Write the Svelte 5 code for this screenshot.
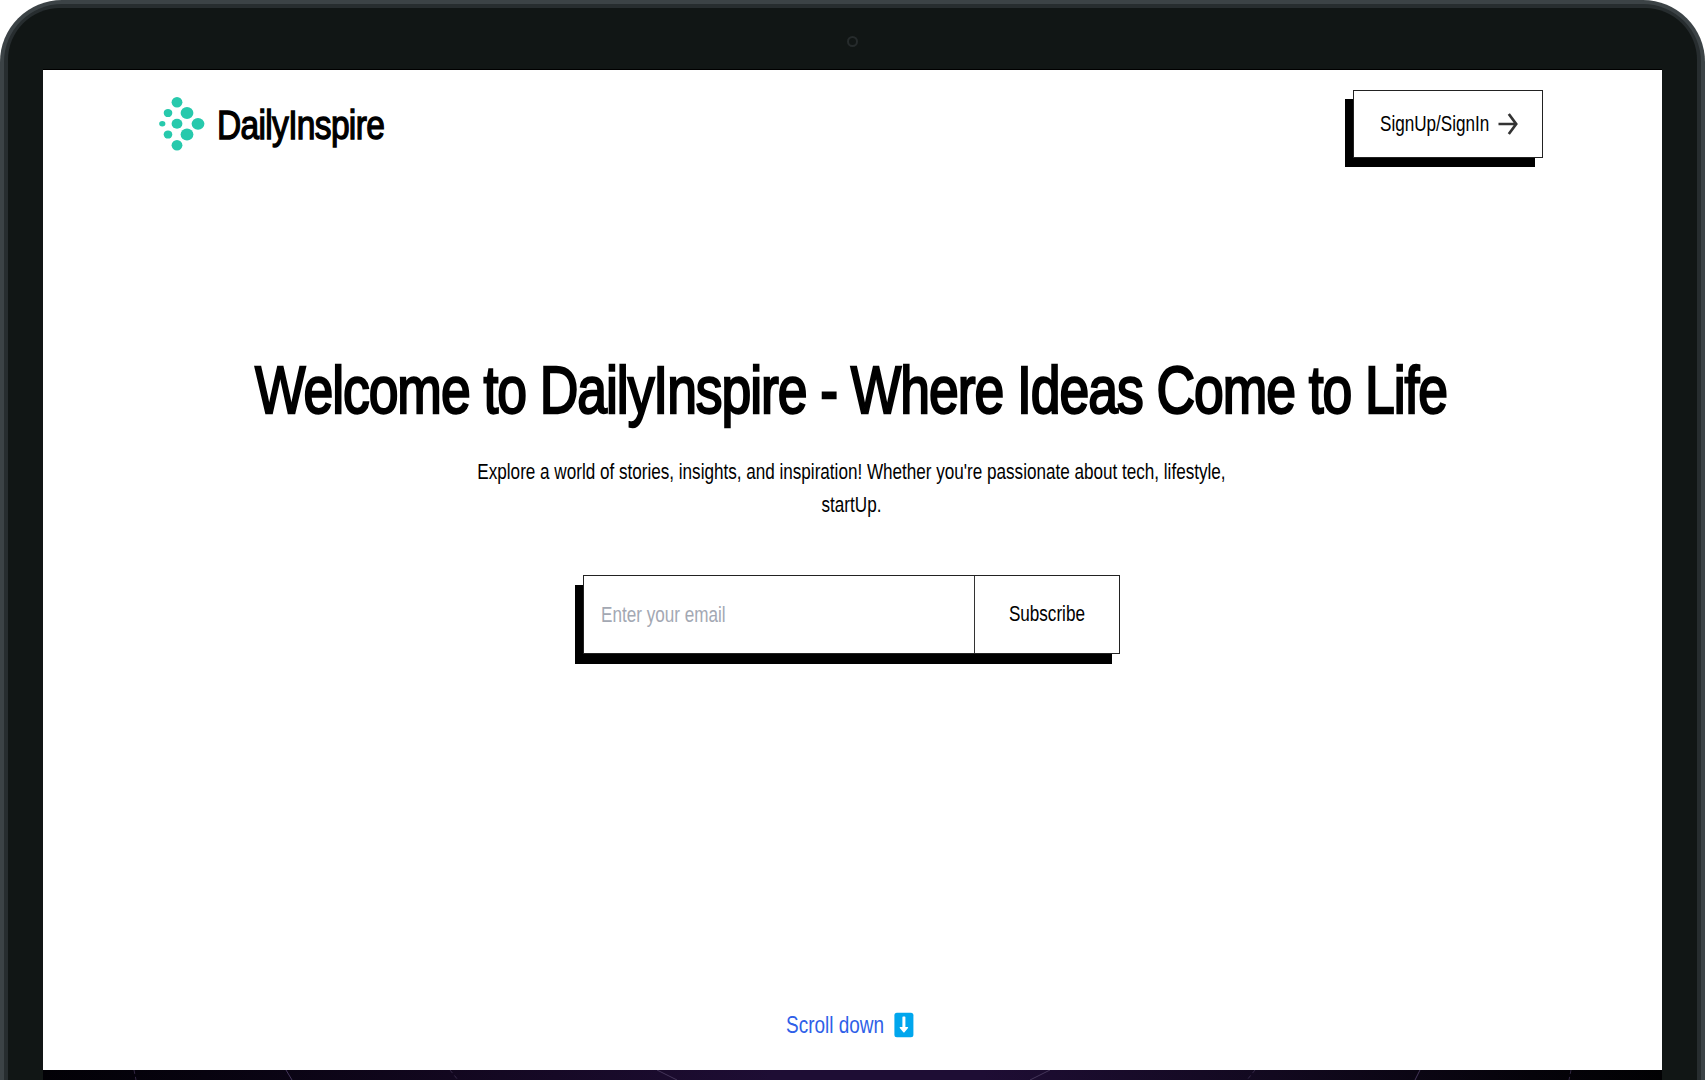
<script>
  const dots = [
    [37, 22.3, 5.4, 5.2], [28, 33, 4.3, 4.1], [47, 33, 6.4, 5.9],
    [22.3, 43.8, 3.1, 2.7], [37, 43.8, 5.4, 5], [58, 43.8, 6.4, 5.9],
    [28, 54.5, 4.3, 4.1], [47, 54.5, 6.4, 5.9], [37, 65.3, 5.4, 5.2]
  ];
  let email = $state('');
</script>

<div class="device">
  <div class="rim">
    <div class="bezel">
      <div class="camera"><i></i></div>
      <main class="screen">
        <header>
          <div class="brand">
            <svg width="48" height="56" viewBox="18 16 48 56" aria-hidden="true">
              {#each dots as [cx, cy, rx, ry]}
                <ellipse {cx} {cy} {rx} {ry} fill="#27c9ac" />
              {/each}
            </svg>
            <span class="brand-name">DailyInspire</span>
          </div>
          <button class="sign">
            <span class="sign-label">SignUp/SignIn</span>
            <svg width="20" height="24" viewBox="0 0 20 24" aria-hidden="true">
              <path d="M0.5 12H18M10.8 2L18.2 12L10.8 22" fill="none" stroke="#333" stroke-width="2.7" />
            </svg>
          </button>
        </header>

        <section class="hero">
          <h1><span>Welcome to DailyInspire - Where Ideas Come to Life</span></h1>
          <p>
            <span>Explore a world of stories, insights, and inspiration! Whether you're passionate about tech, lifestyle,</span>
            <span>startUp.</span>
          </p>
          <form onsubmit={(e) => e.preventDefault()}>
            <div class="field"><input type="email" placeholder="Enter your email" bind:value={email} /></div>
            <button><span>Subscribe</span></button>
          </form>
        </section>

        <div class="scroll">
          <span class="scroll-label">Scroll down</span>
          <svg width="20" height="26" viewBox="0 0 20 26" aria-hidden="true">
            <rect x="0.4" y="0.7" width="19" height="24.6" rx="2.5" fill="#00a6ed" />
            <path d="M8.4 5.2Q8.4 4.5 9.1 4.5H10.7Q11.4 4.5 11.4 5.2V15H13.6Q14.6 15.2 14 16.1L10.5 20.2Q9.9 20.8 9.3 20.2L5.8 16.1Q5.2 15.2 6.2 15H8.4Z" fill="#fff" />
          </svg>
        </div>
      </main>
      <svg class="wallpaper" viewBox="0 0 1619 10" aria-hidden="true">
        <defs>
          <linearGradient id="night">
            <stop offset="0" stop-color="#020106" />
            <stop offset="0.1" stop-color="#07030f" />
            <stop offset="0.25" stop-color="#12071f" />
            <stop offset="0.45" stop-color="#1e0d34" />
            <stop offset="0.58" stop-color="#1e0d34" />
            <stop offset="0.76" stop-color="#12091f" />
            <stop offset="0.92" stop-color="#05030a" />
            <stop offset="1" stop-color="#010103" />
          </linearGradient>
        </defs>
        <rect width="1619" height="10" fill="url(#night)" />
        <g fill="none" stroke="#44365a">
          <path d="M243 0L249 10M614 0L634 10M1007 0L987 10M1377 0L1372 10" />
          <path d="M91 0L93 10M407 0L415 10M1212 0L1204 10M1528 0L1526 10" stroke-dasharray="4 3" opacity="0.7" />
        </g>
      </svg>
    </div>
  </div>
</div>

<style>
  :global(body) { margin: 0; background: #fff; overflow: hidden; }
  * { box-sizing: border-box; }
  .device {
    --squeeze: 0.777;
    height: 1080px;
    overflow: hidden;
    padding: 4px 4px 0;
    border-radius: 62px 62px 0 0;
    background: #3c4346;
    font-family: "Liberation Sans", Arial, sans-serif;
    color: #000;
  }
  .rim { height: 1076px; padding: 4px 4px 0; border-radius: 58px 58px 0 0; background: #272d2f; }
  .bezel {
    height: 1072px;
    padding: 0 35px;
    border-radius: 52px 52px 0 0;
    background: #111615;
    display: flex;
    flex-direction: column;
  }
  .camera { height: 62px; flex: none; display: flex; justify-content: center; padding-top: 28px; border-bottom: 1px solid #000; }
  .camera i { width: 11px; height: 11px; border: 2px solid #262b2c; border-radius: 50%; }
  .screen { height: 1000px; flex: none; padding: 20px 3px 0 0; background: #fff; display: flex; flex-direction: column; }
  .wallpaper { width: 1619px; height: 10px; flex: none; display: block; }

  header { height: 67px; padding: 0 117px 0 115px; display: flex; align-items: center; justify-content: space-between; }
  .brand { display: flex; align-items: center; gap: 11px; }
  .brand-name {
    width: 168px;
    font-size: 41.5px;
    line-height: 50px;
    letter-spacing: -0.02em;
    white-space: nowrap;
    transform: scaleX(0.808);
    transform-origin: left;
    -webkit-text-stroke: 1.4px #000;
    margin-top: 2px;
  }
  button { font: inherit; color: #000; background: #fff; border: 0; padding: 0; }
  .sign {
    width: 190px;
    height: 68px;
    margin-right: -1px;
    border: 1px solid #222;
    box-shadow: -8px 9px 0 #000;
    display: flex;
    align-items: center;
    padding-left: 26px;
    gap: 9px;
  }
  .sign-label {
    width: 109px;
    font-size: 22px;
    text-align: left;
    white-space: nowrap;
    transform: scaleX(var(--squeeze));
    transform-origin: left;
  }

  .hero { flex: 1; padding-top: 192px; display: flex; flex-direction: column; align-items: center; }
  h1, p { margin: 0; text-align: center; white-space: nowrap; }
  h1 { font-size: 67px; line-height: 82px; font-weight: 400; letter-spacing: -0.02em; -webkit-text-stroke: 2.3px #000; }
  h1 span { display: block; transform: scaleX(0.799); }
  p { margin-top: 24px; font-size: 22px; line-height: 33.3px; }
  p span { display: block; transform: scaleX(var(--squeeze)); }
  form {
    width: 537px;
    height: 79px;
    margin-top: 53.4px;
    display: flex;
    border: 1px solid #222;
    background: #fff;
    box-shadow: -8px 10px 0 #000;
  }
  .field { width: 391px; border-right: 1px solid #333; overflow: hidden; }
  input {
    width: calc(100% / var(--squeeze));
    height: 100%;
    padding: 1px 0 0 22px;
    border: 0;
    outline: 0;
    background: transparent;
    font: 22px "Liberation Sans", Arial, sans-serif;
    transform: scaleX(var(--squeeze));
    transform-origin: left;
  }
  input::placeholder { color: #a3a8b3; opacity: 1; }
  form button { flex: 1; font-size: 22px; }
  form button span { display: inline-block; transform: scaleX(var(--squeeze)); }

  .scroll {
    height: 60px;
    margin-right: 3px;
    display: flex;
    justify-content: center;
    align-items: flex-start;
    gap: 10px;
    color: #2f5fe8;
  }
  .scroll-label {
    width: 98px;
    font-size: 24px;
    line-height: 30px;
    white-space: nowrap;
    transform: scaleX(0.79);
    transform-origin: left;
  }
  .scroll svg { margin-top: 2px; }
</style>
